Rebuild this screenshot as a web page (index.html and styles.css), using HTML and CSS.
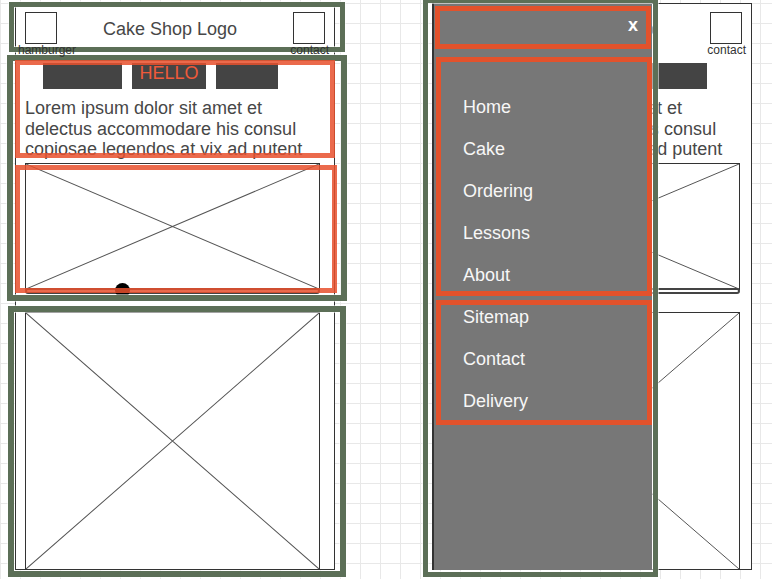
FILE: index.html
```html
<!DOCTYPE html>
<html lang="en">
<head>
<meta charset="utf-8">
<title>Cake Shop wireframe</title>
<link rel="stylesheet" href="styles.css">
</head>
<body>
<div class="canvas">
  <div class="phone phone-a">
    <div class="phone-head">
      <div class="sq"></div>
      <div class="logo">Cake Shop Logo</div>
      <div class="sq"></div>
    </div>
    <div class="labels"><span>hamburger</span><span>contact</span></div>
    <div class="tabs">
      <div class="tab tab-1"></div>
      <div class="tab tab-2">HELLO</div>
      <div class="tab tab-3"></div>
    </div>
    <p class="lorem">Lorem ipsum dolor sit amet et<br>delectus accommodare his consul<br>copiosae legendos at vix ad putent</p>
    <div class="ph ph-small"><svg viewBox="0 0 100 100" preserveAspectRatio="none"><path d="M0 0L100 100M100 0L0 100"/></svg></div>
    <div class="slider"><span class="knob"></span></div>
    <div class="ph ph-large"><svg viewBox="0 0 100 100" preserveAspectRatio="none"><path d="M0 0L100 100M100 0L0 100"/></svg></div>
  </div>

  <div class="phone phone-b">
    <div class="phone-head">
      <div class="sq"></div>
      <div class="logo">Cake Shop Logo</div>
      <div class="sq"></div>
    </div>
    <div class="labels"><span>hamburger</span><span>contact</span></div>
    <div class="tabs">
      <div class="tab tab-1"></div>
      <div class="tab tab-2">HELLO</div>
      <div class="tab tab-3"></div>
    </div>
    <p class="lorem">Lorem ipsum dolor sit amet et<br>delectus accommodare his consul<br>copiosae legendos at vix ad putent</p>
    <div class="ph ph-small"><svg viewBox="0 0 100 100" preserveAspectRatio="none"><path d="M0 0L100 100M100 0L0 100"/></svg></div>
    <div class="slider"></div>
    <div class="ph ph-large"><svg viewBox="0 0 100 100" preserveAspectRatio="none"><path d="M0 0L100 100M100 0L0 100"/></svg></div>

    <nav class="drawer">
      <div class="drawer-head"><span class="close">x</span></div>
      <ul class="menu menu-main">
        <li>Home</li>
        <li>Cake</li>
        <li>Ordering</li>
        <li>Lessons</li>
        <li>About</li>
      </ul>
      <ul class="menu menu-extra">
        <li>Sitemap</li>
        <li>Contact</li>
        <li>Delivery</li>
      </ul>
    </nav>
  </div>

  <div class="mark g g1"></div>
  <div class="mark g g2"></div>
  <div class="mark g g3"></div>
  <div class="mark g g4"></div>
  <div class="mark o o1"></div>
  <div class="mark o o2"></div>
</div>
</body>
</html>
```

FILE: styles.css
```css
* {
  box-sizing: border-box;
}

html,
body {
  margin: 0;
  padding: 0;
}

body {
  background-color: #ffffff;
  background-image:
    linear-gradient(90deg, #e8e8e8 1px, transparent 1px),
    linear-gradient(180deg, #e8e8e8 1px, transparent 1px);
  background-size: 20px 20px;
  background-position: 0 3px;
  font-family: "Liberation Sans", Arial, sans-serif;
}

.canvas {
  position: relative;
  width: 772px;
  height: 579px;
  overflow: hidden;
}

/* phone frames on the canvas */
.phone {
  position: absolute;
  top: 3px;
  width: 320px;
  height: 567px;
  border: 1px solid #333333;
  background: #ffffff;
  display: flex;
  flex-direction: column;
}

.phone-a {
  left: 15px;
}

.phone-b {
  left: 432px;
}

.phone-head {
  display: grid;
  grid-template-columns: 32px 1fr 32px;
  align-items: start;
  padding: 8px 9px 0;
}

.sq {
  width: 32px;
  height: 32px;
  border: 1px solid #333333;
}

.logo {
  padding: 2px 10px 0 0;
  text-align: center;
  font-size: 18px;
  line-height: 30px;
  color: #474747;
  white-space: nowrap;
}

.labels {
  display: flex;
  justify-content: space-between;
  padding: 0 5px 0 2px;
  font-size: 12px;
  line-height: 12px;
  color: #333333;
}

.phone-a .labels {
  position: relative;
  z-index: 3;
}

.tabs {
  display: flex;
  gap: 10px;
  margin-top: 7px;
  padding-left: 27px;
  height: 26px;
}

.tab {
  height: 26px;
  background: #444444;
}

.tab-1 {
  width: 79px;
}

.tab-2 {
  width: 74px;
  color: #f05a3a;
  font-size: 18px;
  line-height: 21px;
  text-align: center;
}

.tab-3 {
  width: 62px;
}

.phone-b .tab-3 {
  width: 74px;
}

.lorem {
  margin: 9px 0 0 9px;
  height: 62px;
  font-size: 18px;
  line-height: 20.5px;
  color: #474747;
  white-space: nowrap;
}

.phone-b .lorem {
  margin-left: 12px;
}

.ph {
  position: relative;
  flex-shrink: 0;
  width: 295px;
  margin-left: 9px;
  border: 1px solid #333333;
  overflow: hidden;
}

.ph svg {
  position: absolute;
  inset: 0;
  display: block;
  width: 100%;
  height: 100%;
}

.ph path {
  fill: none;
  stroke: #555555;
  stroke-width: 1;
  vector-effect: non-scaling-stroke;
}

.ph-small {
  margin-top: 3px;
  height: 127px;
}

.ph-large {
  margin-top: 18px;
  height: 258px;
}

.slider {
  position: relative;
  flex-shrink: 0;
  width: 295px;
  height: 6px;
  margin: -2px 0 0 9px;
  border: 2px solid #444444;
  border-radius: 3px;
  background: #ffffff;
}

.phone-b .ph,
.phone-b .slider {
  width: 298px;
}

.knob {
  position: absolute;
  left: 88px;
  top: -6.5px;
  width: 15px;
  height: 15px;
  border-radius: 50%;
  background: #000000;
}

/* slide-out drawer over phone b */
.drawer {
  position: absolute;
  left: -1px;
  top: -1px;
  width: 220px;
  height: 567px;
  background: #777777;
  border-left: 2px solid #333333;
}

.drawer-head {
  width: 216px;
  height: 43px;
  margin: 3px 0 0 1px;
  border: 5px solid #e2522c;
  padding: 4px 8px 0 0;
  text-align: right;
}

.close {
  color: #ffffff;
  font-size: 18px;
  font-weight: bold;
  line-height: 20px;
}

.menu {
  list-style: none;
  width: 216px;
  margin: 0 0 0 2px;
  padding: 0 0 0 22px;
  border: 5px solid #e2522c;
  display: flex;
  flex-direction: column;
  gap: 21px;
  color: #f7f7f7;
  font-size: 18px;
}

.menu li {
  line-height: 21px;
}

.menu-main {
  margin-top: 8px;
  height: 239px;
  padding-top: 34.5px;
}

.menu-extra {
  margin-top: 4px;
  height: 125px;
  padding-top: 1.6px;
}

/* annotation marks drawn over the wireframes */
.mark {
  position: absolute;
  pointer-events: none;
}

.g {
  border: 5px solid #5c6f57;
  box-shadow: 0 0 0 1px rgba(255, 255, 255, 0.55), inset 0 0 0 1px rgba(255, 255, 255, 0.55);
}

.g1 {
  left: 9px;
  top: 2px;
  width: 336px;
  height: 50px;
}

.g2 {
  left: 7px;
  top: 55px;
  width: 340px;
  height: 246px;
  border-width: 6px;
}

.g3 {
  left: 8px;
  top: 306px;
  width: 338px;
  height: 271px;
  border-width: 6px;
}

.g4 {
  left: 423px;
  top: -2px;
  width: 235px;
  height: 579px;
}

.o {
  border: 5px solid rgba(232, 80, 45, 0.85);
}

.o1 {
  left: 15px;
  top: 60px;
  width: 320px;
  height: 98px;
}

.o2 {
  left: 15px;
  top: 165px;
  width: 322px;
  height: 128px;
}
```
